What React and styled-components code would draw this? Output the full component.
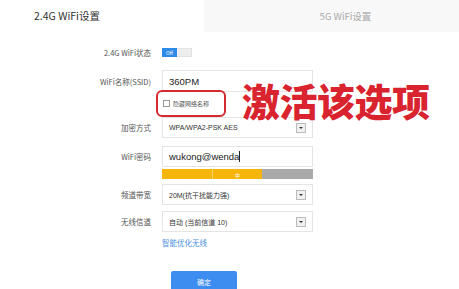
import React from "react";
import styled, { createGlobalStyle } from "styled-components";

const GlobalStyle = createGlobalStyle`
  html, body {
    margin: 0;
    padding: 0;
    background: #fff;
    font-family: "Noto Sans CJK SC", "Noto Sans", sans-serif;
  }
`;

const Page = styled.div`
  position: relative;
  width: 459px;
  height: 289px;
  overflow: hidden;
  background: #fff;
`;

const Tabs = styled.div`
  display: flex;
  height: 32px;
`;

const Tab = styled.div`
  display: flex;
  align-items: center;
  width: ${(p) => (p.active ? "204px" : "auto")};
  flex: ${(p) => (p.active ? "none" : "1")};
  justify-content: ${(p) => (p.active ? "flex-start" : "center")};
  padding-left: ${(p) => (p.active ? "34px" : "28px")};
  box-sizing: border-box;
  background: ${(p) => (p.active ? "#fff" : "#f8f8f8")};
  color: ${(p) => (p.active ? "#333" : "#aaa")};
  font-size: ${(p) => (p.active ? "10.5px" : "9.5px")};
  padding-bottom: 1px;
`;

const Form = styled.div`
  display: flex;
  flex-direction: column;
`;

const Row = styled.div`
  display: grid;
  grid-template-columns: 151px 151px;
  column-gap: 11px;
  align-items: center;
  height: ${(p) => p.h}px;
  margin-top: ${(p) => p.mt}px;
`;

const Label = styled.div`
  text-align: right;
  font-size: 7.5px;
  color: #555;
`;

const Toggle = styled.div`
  display: flex;
  width: 30px;
  height: 9px;
`;

const ToggleOn = styled.div`
  width: 15px;
  background: #2d8ae6;
  color: #fff;
  font-size: 5px;
  display: flex;
  align-items: center;
  justify-content: center;
`;

const ToggleOff = styled.div`
  flex: 1;
  background: #eee;
  border: 1px solid #e2e2e2;
  border-left: none;
`;

const Input = styled.div`
  height: ${(p) => p.h}px;
  box-sizing: border-box;
  border: 1px solid #e4e4e4;
  display: flex;
  align-items: center;
  padding-left: 6px;
  font-family: "Liberation Sans", "Noto Sans CJK SC", sans-serif;
  font-size: ${(p) => (p.big ? "9.5px" : "7px")};
  color: #222;
`;

const Caret = styled.span`
  display: inline-block;
  width: 1px;
  height: 11px;
  background: #222;
`;

const Select = styled(Input)`
  justify-content: space-between;
  padding-right: 6px;
  color: #333;
`;

const Arrow = styled.div`
  width: 8px;
  height: 8px;
  border: 1px solid #bbb;
  background: #f0f0f0;
  display: flex;
  align-items: center;
  justify-content: center;
  &::after {
    content: "";
    border-left: 2px solid transparent;
    border-right: 2px solid transparent;
    border-top: 2px solid #333;
  }
`;

const CheckLine = styled.div`
  display: flex;
  align-items: center;
  gap: 3px;
  font-size: 6px;
  color: #555;
  padding-left: 1px;
`;

const Box = styled.span`
  width: 5px;
  height: 5px;
  border: 1px solid #999;
  background: #fff;
`;

const Strength = styled.div`
  display: flex;
  height: 10px;
`;

const Seg = styled.div`
  width: ${(p) => p.w}px;
  background: ${(p) => p.c};
  border-right: ${(p) => (p.split ? "1px solid #fbd36a" : "none")};
  color: #fff;
  font-size: 5px;
  display: flex;
  align-items: center;
  justify-content: center;
`;

const Link = styled.div`
  font-size: 7.5px;
  color: #4a8fe0;
`;

const Button = styled.div`
  margin: 23px 0 0 171px;
  width: 66px;
  height: 22px;
  background: #3d8cf0;
  border-radius: 2px 2px 0 0;
  color: #fff;
  font-size: 7px;
  display: flex;
  align-items: center;
  justify-content: center;
`;

const Highlight = styled.div`
  position: absolute;
  left: 156px;
  top: 90px;
  width: 70px;
  height: 27px;
  box-sizing: border-box;
  border: 2px solid #d42a30;
  border-radius: 6px;
`;

const Callout = styled.div`
  position: absolute;
  left: 242px;
  top: 75px;
  font-size: 38px;
  font-weight: 900;
  line-height: 50px;
  color: #d9232e;
  letter-spacing: -0.5px;
`;

export default function App() {
  return (
    <Page>
      <GlobalStyle />
      <Tabs>
        <Tab active>2.4G WiFi设置</Tab>
        <Tab>5G WiFi设置</Tab>
      </Tabs>
      <Form>
        <Row h={20} mt={10}>
          <Label>2.4G WiFi状态</Label>
          <Toggle>
            <ToggleOn>Off</ToggleOn>
            <ToggleOff />
          </Toggle>
        </Row>
        <Row h={22} mt={8}>
          <Label>WiFi名称(SSID)</Label>
          <Input h={22} big>360PM</Input>
        </Row>
        <Row h={14} mt={4}>
          <span />
          <CheckLine>
            <Box />
            隐藏网络名称
          </CheckLine>
        </Row>
        <Row h={21} mt={7}>
          <Label>加密方式</Label>
          <Select h={21}>
            WPA/WPA2-PSK AES
            <Arrow />
          </Select>
        </Row>
        <Row h={21} mt={8}>
          <Label>WiFi密码</Label>
          <Input h={21} big>
            wukong@wenda
            <Caret />
          </Input>
        </Row>
        <Row h={10} mt={2}>
          <span />
          <Strength>
            <Seg w={50} c="#f5b50a" split />
            <Seg w={50} c="#f5b50a">中</Seg>
            <Seg w={51} c="#a9a9a9" />
          </Strength>
        </Row>
        <Row h={21} mt={5}>
          <Label>频道带宽</Label>
          <Select h={21}>
            20M(抗干扰能力强)
            <Arrow />
          </Select>
        </Row>
        <Row h={21} mt={6}>
          <Label>无线信道</Label>
          <Select h={21}>
            自动 (当前信道 10)
            <Arrow />
          </Select>
        </Row>
        <Row h={12} mt={4}>
          <span />
          <Link>智能优化无线</Link>
        </Row>
        <Button>确定</Button>
      </Form>
      <Highlight />
      <Callout>激活该选项</Callout>
    </Page>
  );
}
